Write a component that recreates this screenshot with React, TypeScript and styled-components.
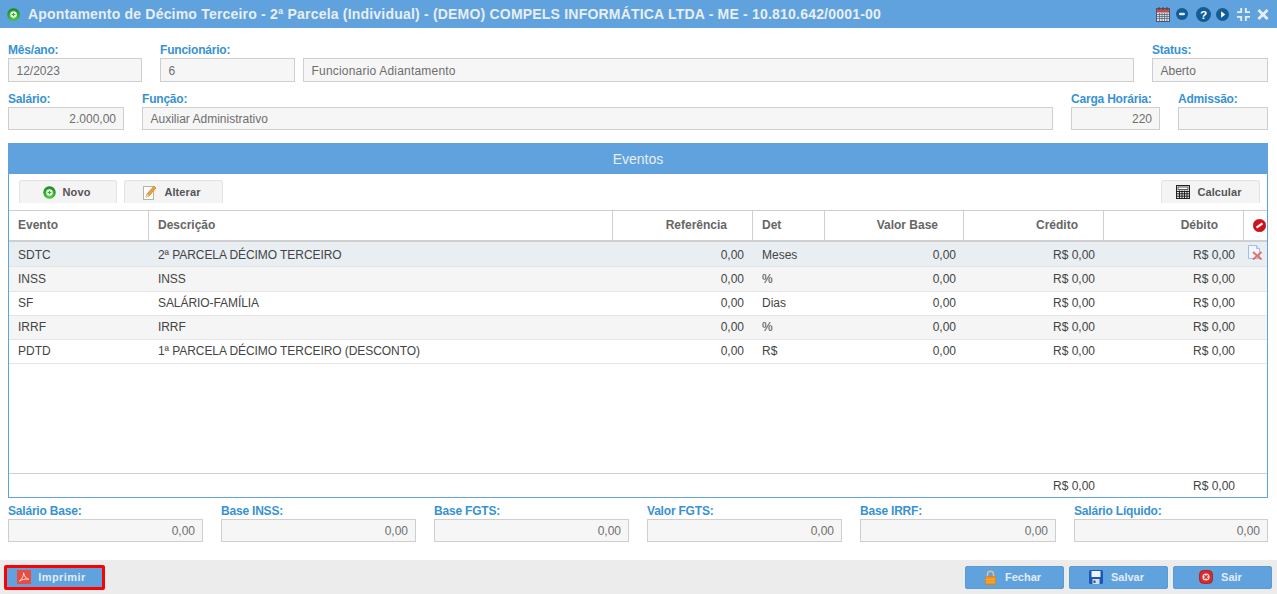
import React from "react";
import styled, { createGlobalStyle } from "styled-components";

const Global = createGlobalStyle`
  html, body { margin: 0; padding: 0; background: #fff; }
  body { font-family: "Liberation Sans", Arial, sans-serif; width: 1277px; height: 594px; overflow: hidden; }
  * { box-sizing: border-box; }
`;

const Page = styled.div`
  width: 1277px; height: 594px; display: flex; flex-direction: column; background: #fff;
`;
const Header = styled.header`
  height: 28px; background: #5fa2dd; display: flex; align-items: center; padding: 0 8px 0 7px; flex: none;
`;
const Title = styled.h1`
  margin: 0 0 0 8px; flex: 1; font-size: 14px; font-weight: 700; color: #e8eef4; letter-spacing: 0.2px; white-space: nowrap;
`;
const HeaderTools = styled.div`
  display: flex; align-items: center;
`;
const ToolSlot = styled.span<{ $ml: number }>`
  display: flex; margin-left: ${p => p.$ml}px;
`;
const Form = styled.main`
  flex: 1; padding: 13px 9px 0 8px; display: flex; flex-direction: column;
`;
const Row = styled.div<{ $mb?: number }>`
  display: flex; gap: 18px; margin-bottom: ${p => p.$mb ?? 0}px;
`;
const Field = styled.div<{ $w?: number; $grow?: boolean }>`
  display: flex; flex-direction: column;
  ${p => (p.$w ? `width:${p.$w}px;flex:none;` : "")}
  ${p => (p.$grow ? "flex:1;min-width:0;" : "")}
`;
const Label = styled.label`
  height: 17px; font-size: 12px; line-height: 18px; font-weight: 700; color: #3892d4; white-space: nowrap; letter-spacing: -0.2px;
`;
const Inputs = styled.div`
  display: flex; gap: 8px;
`;
const Box = styled.div<{ $w?: number; $right?: boolean; $h?: number; $ls?: number }>`
  height: ${p => p.$h ?? 24}px; flex: none; border: 1px solid #cfcfcf; background: #f6f6f6; color: #6e6e6e; font-size: 12px;
  line-height: ${p => p.$h ?? 24}px; padding: 0 7px 0 7.5px; white-space: nowrap; overflow: hidden;
  letter-spacing: ${p => p.$ls ?? 0}px;
  ${p => (p.$w ? `width:${p.$w}px;` : "")}
  ${p => (p.$right ? "text-align:right;" : "")}
`;
const WideBox = styled(Box)`
  flex: 1 1 0; min-width: 0;
`;
const Panel = styled.section`
  margin-top: 13px; height: 355px; border: 1px solid #5fa2dd; border-top: 0; display: flex; flex-direction: column;
`;
const PanelTitle = styled.div`
  height: 31px; margin: 0 -1px; background: #5fa2dd; color: #e8eef4; font-size: 14px; line-height: 32px; text-align: center; flex: none;
`;
const Toolbar = styled.div`
  height: 36px; flex: none; display: flex; padding: 6px 7px 0 10px; gap: 7px; justify-content: flex-start;
`;
const ToolButton = styled.button<{ $w: number; $push?: boolean }>`
  width: ${p => p.$w}px; height: 23px; border: 1px solid #e3e3e3; border-bottom: 0; border-radius: 3px 3px 0 0;
  background: #f4f4f4; color: #555; font: 700 11px "Liberation Sans", Arial, sans-serif; letter-spacing: .1px;
  display: flex; align-items: center; justify-content: center; gap: 7px; padding: 0 3px 0 0;
  ${p => (p.$push ? "margin-left:auto;" : "")}
`;
const Table = styled.div`
  flex: 1; display: flex; flex-direction: column; min-height: 0;
`;
const COLS = "140px 464px 140px 72px 139px 140px 140px 1fr";
const HeadRow = styled.div`
  display: grid; grid-template-columns: ${COLS}; height: 32px; flex: none;
  border-top: 1px solid #cfcfcf; border-bottom: 2px solid #cfcfcf;
`;
const Head = styled.div<{ $right?: boolean; $last?: boolean }>`
  border-right: ${p => (p.$last ? "0" : "1px solid #cfcfcf")}; font-size: 12px; font-weight: 700; color: #666;
  line-height: 29px; padding: ${p => (p.$right ? "0 25px 0 0" : "0 0 0 9px")}; text-align: ${p => (p.$right ? "right" : "left")};
  display: ${p => (p.$last ? "flex" : "block")}; align-items: center; justify-content: center;
`;
const NoSlot = styled.span`
  display: flex; margin-right: 1px;
`;
const BodyRows = styled.div`
  flex: 1; min-height: 0;
`;
const DataRow = styled.div<{ $tone: "sel" | "odd" | "even"; $h: number; $lh: number }>`
  display: grid; grid-template-columns: ${COLS}; height: ${p => p.$h}px; border-bottom: 1px solid #e5e5e5;
  line-height: ${p => p.$lh}px; overflow: hidden;
  background: ${p => (p.$tone === "sel" ? "#e9eef3" : p.$tone === "even" ? "#f5f5f5" : "#fff")};
`;
const Cell = styled.div<{ $right?: boolean; $tight?: boolean; $ls?: number }>`
  font-size: 12px; color: #444; white-space: nowrap; letter-spacing: ${p => p.$ls ?? 0}px;
  padding: ${p => (p.$right ? `0 ${p.$tight ? 8 : 9}px 0 0` : "0 0 0 9px")}; text-align: ${p => (p.$right ? "right" : "left")};
`;
const IconCell = styled.div`
  display: flex; justify-content: center; padding-top: 3px; padding-right: 1px;
`;
const TotalRow = styled.div`
  display: grid; grid-template-columns: ${COLS}; height: 24px; flex: none; border-top: 1px solid #cfcfcf; line-height: 24px;
`;
const Summary = styled(Row)`
  margin-top: 4px;
`;
const Footer = styled.footer`
  height: 34px; flex: none; background: #ececec; display: flex; align-items: center; padding: 0 5px 0 4px; gap: 5px;
`;
const FooterButton = styled.button`
  width: 99px; height: 23px; border: 1px solid #5a9bd4; border-radius: 2px; background: #5fa2dd; color: #e3ecf5;
  font: 700 11px "Liberation Sans", Arial, sans-serif;
  display: flex; align-items: center; justify-content: center; gap: 8px; padding: 0 4px 0 0;
`;
const PrintButton = styled(FooterButton)`
  width: 101px; height: 25px; border: 3px solid #f00; margin-right: auto; gap: 7px; padding: 0 6px 0 0; letter-spacing: .45px;
`;

const PlusIcon = ({ size = 13 }: { size?: number }) => (
  <svg width={size} height={size} viewBox="0 0 14 14">
    <defs>
      <radialGradient id="g" cx="50%" cy="70%" r="70%"><stop offset="0" stopColor="#5fe04a" /><stop offset="1" stopColor="#12861c" /></radialGradient>
    </defs>
    <circle cx="7" cy="7" r="6.7" fill="url(#g)" />
    <circle cx="7" cy="7" r="3.5" fill="#f2f9ee" />
    <path d="M7 5v4M5 7h4" stroke="#3aa93a" strokeWidth="1.2" />
  </svg>
);
const CalendarIcon = () => (
  <svg width="14" height="15" viewBox="0 0 14 15">
    <rect x=".5" y="1.5" width="13" height="13" fill="#dfe3ea" stroke="#4a5668" />
    <rect x="1" y="2" width="12" height="3.5" fill="#bf4d4d" />
    <path d="M3 0v3M7 0v3M11 0v3" stroke="#444" />
    <path d="M1 7.5h12M1 9.5h12M1 11.5h12M3.5 6v8M6 6v8M8.5 6v8M11 6v8" stroke="#5b6777" strokeWidth=".8" />
  </svg>
);
const DarkDisc = ({ children, size = 14 }: { children: React.ReactNode; size?: number }) => (
  <svg width={size} height={size} viewBox="0 0 14 14"><circle cx="7" cy="7" r="7" fill="#135c94" />{children}</svg>
);
const ExpandIcon = () => (
  <svg width="13" height="13" viewBox="0 0 14 14" fill="none" stroke="#e6eef5" strokeWidth="2">
    <path d="M4.5 0v4.5H0M9.5 0v4.5H14M4.5 14V9.5H0M9.5 14V9.5H14" />
  </svg>
);
const CloseIcon = () => (
  <svg width="12" height="11" viewBox="0 0 12 12" stroke="#e6eef5" strokeWidth="3"><path d="M1 1l10 10M11 1L1 11" /></svg>
);
const PencilIcon = () => (
  <svg width="14" height="16" viewBox="0 0 14 16">
    <rect x=".5" y="2.5" width="10" height="13" fill="#fff" stroke="#b9b39f" />
    <path d="M3 13l1-3 7-8 2 2-7 8z" fill="#eba32f" stroke="#b97516" strokeWidth=".6" />
    <path d="M3 13l1-3 2 2z" fill="#f6dfb2" />
  </svg>
);
const CalcIcon = () => (
  <svg width="14" height="14" viewBox="0 0 14 14">
    <rect x=".5" y=".5" width="13" height="13" fill="#e8e8e8" stroke="#222" />
    <rect x="2" y="2" width="10" height="2.6" fill="#fff" stroke="#222" strokeWidth=".7" />
    <path d="M1 6.5h12M1 8.8h12M1 11.2h12M3.5 5.5v8M6 5.5v8M8.5 5.5v8M11 5.5v8" stroke="#222" strokeWidth="1" />
  </svg>
);
const NoIcon = () => (
  <svg width="13" height="13" viewBox="0 0 13 13">
    <circle cx="6.5" cy="6.5" r="6.3" fill="#d4101a" stroke="#8f0b12" strokeWidth=".5" />
    <path d="M3.5 8.6l6-4.2" stroke="#fff" strokeWidth="2.2" />
  </svg>
);
const DeleteDocIcon = () => (
  <svg width="15" height="15" viewBox="0 0 15 15">
    <path d="M.5 .5h8l3 3v10h-11z" fill="#f3f7fc" stroke="#9dc0e6" />
    <path d="M8.5 .5v3h3" fill="#dbe7f4" stroke="#9dc0e6" />
    <path d="M5 7l8.5 7.5M13.5 7L5 14.5" stroke="#e2716b" strokeWidth="2" />
  </svg>
);
const PdfIcon = () => (
  <svg width="14" height="14" viewBox="0 0 14 14">
    <rect width="14" height="14" fill="#ea4c3f" />
    <path d="M2.5 11C5 9.5 6.5 6 6.6 2.8 7 6 9 8.6 11.8 9.2 8.5 8.6 5 9.4 2.5 11z" fill="none" stroke="#fbe3df" strokeWidth="1" />
  </svg>
);
const LockIcon = () => (
  <svg width="13" height="15" viewBox="0 0 13 15">
    <path d="M3.5 7V4.2a3 3 0 0 1 6 0V7" fill="none" stroke="#d9c39a" strokeWidth="1.5" />
    <rect x="1.5" y="6.5" width="10" height="8" rx=".8" fill="#f0961c" stroke="#d07c10" strokeWidth=".6" />
    <path d="M1.5 9.5h10M1.5 12h10" stroke="#f8b653" strokeWidth=".7" />
  </svg>
);
const SaveIcon = () => (
  <svg width="14" height="14" viewBox="0 0 14 14">
    <rect width="14" height="14" rx="1.5" fill="#1b57b4" />
    <rect x="2.5" y="1" width="9" height="6" fill="#eef3fa" />
    <rect x="3.5" y="9" width="7" height="5" fill="#d7deea" />
    <rect x="4.5" y="10.5" width="2" height="2.5" fill="#30528c" />
  </svg>
);
const ExitIcon = () => (
  <svg width="14" height="14" viewBox="0 0 14 14">
    <rect x=".5" y=".5" width="13" height="13" rx="4" fill="#d92b2b" stroke="#9c1414" strokeWidth=".7" />
    <circle cx="7" cy="7" r="3.6" fill="#f7dede" />
    <path d="M5.3 5.3l3.4 3.4M8.7 5.3l-3.4 3.4" stroke="#d92b2b" strokeWidth="1.3" />
  </svg>
);

const rows = [
  { e: "SDTC", d: "2ª PARCELA DÉCIMO TERCEIRO", det: "Meses", tone: "sel" as const, h: 25, lh: 26 },
  { e: "INSS", d: "INSS", det: "%", tone: "even" as const, h: 25, lh: 24 },
  { e: "SF", d: "SALÁRIO-FAMÍLIA", det: "Dias", tone: "odd" as const, h: 24, lh: 22 },
  { e: "IRRF", d: "IRRF", det: "%", tone: "even" as const, h: 24, lh: 22 },
  { e: "PDTD", d: "1ª PARCELA DÉCIMO TERCEIRO (DESCONTO)", det: "R$", tone: "odd" as const, h: 24, lh: 22 },
];
const summary: [string, number][] = [
  ["Salário Base:", 195], ["Base INSS:", 195], ["Base FGTS:", 195], ["Valor FGTS:", 195], ["Base IRRF:", 196], ["Salário Líquido:", 194],
];

export default function App() {
  return (
    <Page>
      <Global />
      <Header>
        <PlusIcon />
        <Title>Apontamento de Décimo Terceiro - 2ª Parcela (Individual) - (DEMO) COMPELS INFORMÁTICA LTDA - ME - 10.810.642/0001-00</Title>
        <HeaderTools>
          <ToolSlot $ml={0}><CalendarIcon /></ToolSlot>
          <ToolSlot $ml={6}><DarkDisc size={12}><rect x="3.5" y="5.5" width="7" height="3" rx="1.5" fill="#dfe9f2" /></DarkDisc></ToolSlot>
          <ToolSlot $ml={8}><DarkDisc size={15}><text x="7" y="11" textAnchor="middle" fontSize="11" fontWeight="700" fontFamily="Liberation Sans" fill="#fff">?</text></DarkDisc></ToolSlot>
          <ToolSlot $ml={5}><DarkDisc size={13}><path d="M5.5 3.5l4.5 3.5-4.5 3.5z" fill="#fff" /></DarkDisc></ToolSlot>
          <ToolSlot $ml={8}><ExpandIcon /></ToolSlot>
          <ToolSlot $ml={7}><CloseIcon /></ToolSlot>
        </HeaderTools>
      </Header>
      <Form>
        <Row $mb={8}>
          <Field $w={134}><Label>Mês/ano:</Label><Box>12/2023</Box></Field>
          <Field $grow>
            <Label>Funcionário:</Label>
            <Inputs><Box $w={135}>6</Box><WideBox $ls={0.2}>Funcionario Adiantamento</WideBox></Inputs>
          </Field>
          <Field $w={116}><Label>Status:</Label><Box>Aberto</Box></Field>
        </Row>
        <Row>
          <Field $w={116}><Label>Salário:</Label><Box $right $h={23}>2.000,00</Box></Field>
          <Field $grow><Label>Função:</Label><Box $h={23}>Auxiliar Administrativo</Box></Field>
          <Field $w={89}><Label>Carga Horária:</Label><Box $right $h={23}>220</Box></Field>
          <Field $w={90}><Label>Admissão:</Label><Box $h={23} /></Field>
        </Row>
        <Panel>
          <PanelTitle>Eventos</PanelTitle>
          <Toolbar>
            <ToolButton $w={98}><PlusIcon />Novo</ToolButton>
            <ToolButton $w={99}><PencilIcon />Alterar</ToolButton>
            <ToolButton $w={99} $push><CalcIcon />Calcular</ToolButton>
          </Toolbar>
          <Table>
            <HeadRow>
              <Head>Evento</Head>
              <Head>Descrição</Head>
              <Head $right>Referência</Head>
              <Head>Det</Head>
              <Head $right>Valor Base</Head>
              <Head $right>Crédito</Head>
              <Head $right>Débito</Head>
              <Head $last><NoSlot><NoIcon /></NoSlot></Head>
            </HeadRow>
            <BodyRows>
              {rows.map((r, i) => (
                <DataRow key={r.e} $tone={r.tone} $h={r.h} $lh={r.lh}>
                  <Cell>{r.e}</Cell>
                  <Cell $ls={-0.07}>{r.d}</Cell>
                  <Cell $right>0,00</Cell>
                  <Cell>{r.det}</Cell>
                  <Cell $right $tight>0,00</Cell>
                  <Cell $right>R$ 0,00</Cell>
                  <Cell $right>R$ 0,00</Cell>
                  {i === 0 ? <IconCell><DeleteDocIcon /></IconCell> : <div />}
                </DataRow>
              ))}
            </BodyRows>
            <TotalRow>
              <div /><div /><div /><div /><div />
              <Cell $right>R$ 0,00</Cell>
              <Cell $right>R$ 0,00</Cell>
              <div />
            </TotalRow>
          </Table>
        </Panel>
        <Summary>
          {summary.map(([l, w]) => (
            <Field key={l} $w={w}><Label>{l}</Label><Box $right $h={23}>0,00</Box></Field>
          ))}
        </Summary>
      </Form>
      <Footer>
        <PrintButton><PdfIcon />Imprimir</PrintButton>
        <FooterButton><LockIcon />Fechar</FooterButton>
        <FooterButton><SaveIcon />Salvar</FooterButton>
        <FooterButton><ExitIcon />Sair</FooterButton>
      </Footer>
    </Page>
  );
}
